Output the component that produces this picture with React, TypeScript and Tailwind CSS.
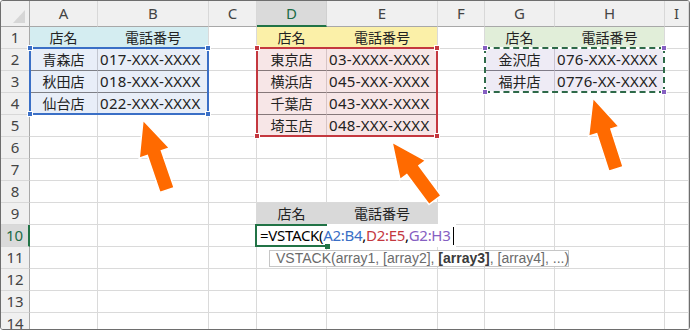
import React from "react";

type CellDef = {
  t?: React.ReactNode;
  bg?: string;
  left?: boolean;
  r?: string;
  b?: string;
};

const COLS = ["A", "B", "C", "D", "E", "F", "G", "H", "I"];

// inner borders of the three source ranges
const T1 = { bg: "bg-[#e8eef8]", b: "border-b-[#7d7f86]" };
const T2 = { bg: "bg-[#f7e6e7]", b: "border-b-[#86787a]" };
const T3 = { bg: "bg-[#eeebf5]", b: "border-b-[#7f7b88]" };

const CELLS: Record<number, Record<string, CellDef>> = {
  1: {
    A: { t: "店名", bg: "bg-[#d4edf1]", r: "border-r-[#d4edf1]" },
    B: { t: "電話番号", bg: "bg-[#d4edf1]" },
    D: { t: "店名", bg: "bg-[#fbf0a8]", r: "border-r-[#fbf0a8]" },
    E: { t: "電話番号", bg: "bg-[#fbf0a8]" },
    G: { t: "店名", bg: "bg-[#e1eed9]", r: "border-r-[#e1eed9]" },
    H: { t: "電話番号", bg: "bg-[#e1eed9]" },
  },
  2: {
    A: { t: "青森店", ...T1, r: "border-r-[#c2c6d0]" },
    B: { t: "017-XXX-XXXX", left: true, ...T1 },
    D: { t: "東京店", ...T2, r: "border-r-[#d6c4c6]" },
    E: { t: "03-XXXX-XXXX", left: true, ...T2 },
    G: { t: "金沢店", ...T3, r: "border-r-[#c9c4d2]" },
    H: { t: "076-XXX-XXXX", left: true, ...T3 },
  },
  3: {
    A: { t: "秋田店", ...T1, r: "border-r-[#c2c6d0]" },
    B: { t: "018-XXX-XXXX", left: true, ...T1 },
    D: { t: "横浜店", ...T2, r: "border-r-[#d6c4c6]" },
    E: { t: "045-XXX-XXXX", left: true, ...T2 },
    G: { t: "福井店", bg: T3.bg, r: "border-r-[#c9c4d2]" },
    H: { t: "0776-XX-XXXX", left: true, bg: T3.bg },
  },
  4: {
    A: { t: "仙台店", bg: T1.bg, r: "border-r-[#c2c6d0]" },
    B: { t: "022-XXX-XXXX", left: true, bg: T1.bg },
    D: { t: "千葉店", ...T2, r: "border-r-[#d6c4c6]" },
    E: { t: "043-XXX-XXXX", left: true, ...T2 },
  },
  5: {
    D: { t: "埼玉店", bg: T2.bg, r: "border-r-[#d6c4c6]" },
    E: { t: "048-XXX-XXXX", left: true, bg: T2.bg },
  },
  9: {
    D: { t: "店名", bg: "bg-[#d9d9d9]", r: "border-r-[#d9d9d9]" },
    E: { t: "電話番号", bg: "bg-[#d9d9d9]" },
  },
  10: {
    D: { r: "border-r-transparent", left: true },
    E: { r: "border-r-transparent" },
  },
};

function arrow(tx: number, ty: number, bx: number, by: number) {
  const H = 35;
  const W = 16;
  const w = 7.5;
  const len = Math.hypot(bx - tx, by - ty);
  const dx = (bx - tx) / len;
  const dy = (by - ty) / len;
  const nx = -dy;
  const ny = dx;
  const hx = tx + dx * H;
  const hy = ty + dy * H;
  const pts = [
    [tx, ty],
    [hx + nx * W, hy + ny * W],
    [hx + nx * w, hy + ny * w],
    [bx + nx * w, by + ny * w],
    [bx - nx * w, by - ny * w],
    [hx - nx * w, hy - ny * w],
    [hx - nx * W, hy - ny * W],
  ];
  return pts.map((p) => `${p[0].toFixed(1)},${p[1].toFixed(1)}`).join(" ");
}

function Handles({ color }: { color: string }) {
  const base = `absolute h-[6px] w-[6px] border border-white ${color}`;
  return (
    <>
      <span className={`${base} -left-[4px] -top-[4px]`} />
      <span className={`${base} -right-[4px] -top-[4px]`} />
      <span className={`${base} -left-[4px] -bottom-[4px]`} />
      <span className={`${base} -right-[4px] -bottom-[4px]`} />
    </>
  );
}

function Formula() {
  return (
    <div className="relative z-10 flex items-center whitespace-nowrap bg-white pl-px pr-[2px] font-['Noto_Sans',sans-serif] text-[15px] tracking-[-0.3px] text-black">
      <span>=VSTACK(</span>
      <span className="text-[#3a6fc6]">A2:B4</span>
      <span>,</span>
      <span className="text-[#c4383f]">D2:E5</span>
      <span>,</span>
      <span className="text-[#8660c2]">G2:H3</span>
      <span className="ml-[3px] inline-block h-[18px] w-px bg-black" />
    </div>
  );
}

export default function App() {
  const rowNums = Array.from({ length: 14 }, (_, i) => i + 1);

  return (
    <div className="relative h-[330px] w-[690px] overflow-hidden rounded-[3px] border border-[#6e6e6e] bg-white font-['Noto_Sans','Noto_Sans_CJK_JP',sans-serif] text-[#222]">
      <div className="grid grid-cols-[29px_68px_111px_48px_70px_111px_47px_70px_110px_1fr] grid-rows-[26px_repeat(14,22px)]">
        {/* corner */}
        <div className="relative border-b border-r border-b-[#a8a8a8] border-r-[#a8a8a8] bg-[#f0f0f0]">
          <svg className="absolute left-0 top-0" width="29" height="26">
            <polygon points="24,9 24,22 12,22" fill="#d6d6d6" />
          </svg>
        </div>
        {COLS.map((c) => (
          <div
            key={c}
            className={`flex items-center justify-center border-r text-[15px] ${
              c === "D"
                ? "border-b-2 border-b-[#217346] border-r-[#d0d0d0] bg-[#dadada] text-[#1c6b46]"
                : "border-b border-b-[#a8a8a8] border-r-[#d8d8d8] bg-[#f0f0f0] text-[#444]"
            }`}
          >
            {c}
          </div>
        ))}

        {rowNums.map((r) => (
          <React.Fragment key={r}>
            <div
              className={`flex items-center justify-center border-b border-b-[#d8d8d8] text-[15px] ${
                r === 10
                  ? "border-r-2 border-r-[#217346] bg-[#dadada] text-[#1c6b46]"
                  : "border-r border-r-[#a8a8a8] bg-[#f0f0f0] text-[#444]"
              }`}
            >
              {r}
            </div>
            {COLS.map((c) => {
              const d = CELLS[r]?.[c] ?? {};
              const isFormula = r === 10 && c === "D";
              return (
                <div
                  key={c}
                  className={`flex items-center whitespace-nowrap border-b border-r ${
                    d.r ?? "border-r-[#dadada]"
                  } ${d.b ?? "border-b-[#dadada]"} ${d.bg ?? "bg-white"} ${
                    d.left
                      ? "justify-start pl-[2px] text-[15px] tracking-[0.3px]"
                      : "justify-center text-[14px]"
                  } ${isFormula ? "overflow-visible" : "overflow-hidden"}`}
                >
                  {isFormula ? (
                    <div className="w-0 self-stretch">
                      <div className="flex h-full items-center">
                        <Formula />
                      </div>
                    </div>
                  ) : (
                    d.t
                  )}
                </div>
              );
            })}
          </React.Fragment>
        ))}
      </div>

      {/* reference ranges */}
      <div className="pointer-events-none absolute left-[28px] top-[46px] h-[68px] w-[180px] border-2 border-[#3a6fc6]">
        <Handles color="bg-[#3a6fc6]" />
      </div>
      <div className="pointer-events-none absolute left-[255px] top-[46px] h-[90px] w-[182px] border-2 border-[#c4383f]">
        <Handles color="bg-[#c4383f]" />
      </div>
      <div className="pointer-events-none absolute left-[483px] top-[46px] h-[46px] w-[181px] border-2 border-white">
        <div className="absolute -inset-[2px] border-2 border-dashed border-[#2e6a49]" />
        <Handles color="bg-[#8660c2]" />
      </div>

      {/* active cell D10 */}
      <div className="pointer-events-none absolute left-[254px] top-[223px] z-20 h-[23px] w-[72px] border-b-2 border-l-2 border-t-2 border-[#217346]">
        <span className="absolute -bottom-[4px] -right-[3px] h-[5px] w-[5px] bg-[#217346]" />
      </div>

      {/* function tooltip */}
      <div className="absolute left-[268px] top-[249px] z-20 flex h-[17px] w-[300px] items-center whitespace-pre border border-[#c6c6c6] bg-white pl-[6px] font-['Liberation_Sans',sans-serif] text-[14px] text-[#6b6b6b]">
        {"VSTACK(array1, [array2], "}
        <b className="text-[#3a3a3a]">[array3]</b>
        {", [array4], ...)"}
      </div>

      {/* arrows */}
      <svg className="pointer-events-none absolute -left-px -top-px z-30" width="690" height="330">
        <polygon points={arrow(143, 120, 167, 190)} fill="#ff6a00" stroke="#fff" strokeWidth="1.5" />
        <polygon points={arrow(392, 142, 435, 200)} fill="#ff6a00" stroke="#fff" strokeWidth="1.5" />
        <polygon points={arrow(593, 98, 616, 169)} fill="#ff6a00" stroke="#fff" strokeWidth="1.5" />
      </svg>
    </div>
  );
}
